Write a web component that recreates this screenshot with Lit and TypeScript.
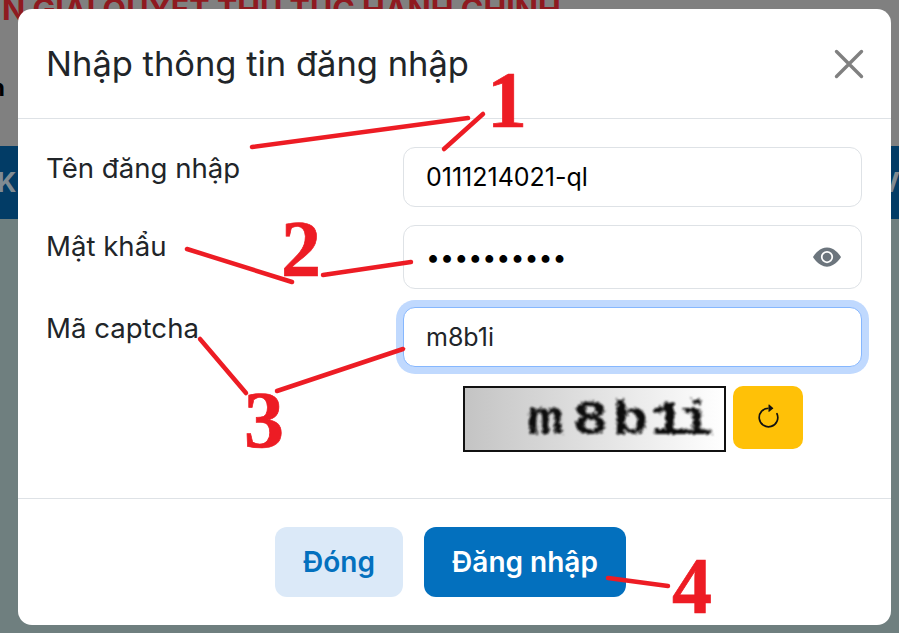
import { LitElement, css, html, svg } from 'lit';
import { customElement } from 'lit/decorators.js';

const LINES = [
  [252, 147, 468, 118],
  [444, 149, 483, 114],
  [187, 249, 292, 282],
  [323, 275, 411, 262],
  [200, 339, 246, 393],
  [277, 391, 403, 349],
  [608, 578, 668, 586],
];

const NUMBERS = [
  { n: '1', x: 507, y: 127 },
  { n: '2', x: 301, y: 276 },
  { n: '3', x: 264, y: 447 },
  { n: '4', x: 692, y: 613 },
];

@customElement('app-root')
export class AppRoot extends LitElement {
  static styles = css`
    :host {
      display: block;
      position: relative;
      width: 899px;
      height: 633px;
      overflow: hidden;
      font-family: Inter, 'Noto Sans', sans-serif;
      background: #6f7f7f;
    }

    .page-top {
      height: 146px;
      background: #808080;
      overflow: hidden;
    }

    .page-title {
      margin: -6px 0 0 2px;
      color: #8f1a20;
      font-size: 30.5px;
      font-weight: 700;
      line-height: 30px;
      white-space: nowrap;
    }

    .page-sub {
      margin: 49px 0 0 -10px;
      color: #000;
      font-size: 24px;
      font-weight: 700;
      line-height: 30px;
    }

    .page-band {
      height: 73px;
      display: flex;
      justify-content: space-between;
      align-items: center;
      margin: 0 -1px 0 -3px;
      background: #023c66;
      color: #808b92;
      font-size: 27px;
      font-weight: 700;
      overflow: hidden;
    }

    .modal {
      position: absolute;
      left: 18px;
      top: 9px;
      width: 873px;
      height: 616px;
      display: flex;
      flex-direction: column;
      background: #fff;
      border-radius: 14px;
      color: #212529;
    }

    .modal-header {
      height: 110px;
      flex: none;
      box-sizing: border-box;
      display: flex;
      align-items: center;
      justify-content: space-between;
      padding: 0 27px 0 28px;
      border-bottom: 1px solid #dee2e6;
    }

    .modal-title {
      margin: 0;
      font-size: 34.5px;
      font-weight: 400;
      line-height: 1.2;
    }

    .close {
      display: block;
      width: 30px;
      height: 30px;
      color: #808080;
    }

    .modal-body {
      flex: 1;
      padding: 28px 29px 0 28px;
      display: grid;
      grid-template-columns: 357px 459px;
      grid-template-rows: 60px 64px 60px auto;
      row-gap: 18px;
    }

    label {
      padding-top: 1px;
      font-size: 27.6px;
      line-height: 40px;
    }

    .field {
      position: relative;
    }

    input {
      display: block;
      box-sizing: border-box;
      width: 100%;
      height: 100%;
      padding: 0 22px;
      border: 1px solid #dee2e6;
      border-radius: 12px;
      background: #fff;
      color: #000;
      font: 400 25px Inter, 'Noto Sans', sans-serif;
      outline: none;
    }

    input.focused {
      border-color: #86b7fe;
      box-shadow: 0 0 0 7px #c0d9fe;
      color: #212529;
    }

    .eye {
      position: absolute;
      right: 21px;
      top: 22px;
      width: 28px;
      height: 20px;
      color: #6c757d;
    }

    .captcha-row {
      grid-column: 2;
      display: flex;
      align-items: flex-start;
      gap: 7px;
      padding: 1px 0 0 60px;
    }

    .captcha {
      display: block;
      box-sizing: border-box;
      width: 263px;
      height: 66px;
      border: 2px solid #111;
      background: linear-gradient(90deg, #c4c4c4, #fff);
    }

    .captcha text {
      font: 700 48px 'Liberation Mono', monospace;
      fill: #111;
    }

    .refresh {
      width: 70px;
      height: 63px;
      display: grid;
      place-items: center;
      padding: 0;
      border: none;
      border-radius: 10px;
      background: #ffc107;
      color: #111;
    }

    .refresh svg {
      display: block;
      width: 27px;
      height: 27px;
    }

    .modal-footer {
      height: 127px;
      flex: none;
      box-sizing: border-box;
      display: flex;
      justify-content: center;
      align-items: flex-start;
      gap: 21px;
      padding: 28px 8px 0 0;
      border-top: 1px solid #dee2e6;
    }

    .btn {
      height: 70px;
      padding: 0;
      border: none;
      border-radius: 12px;
      font: 600 28px Inter, 'Noto Sans', sans-serif;
    }

    .btn-close {
      width: 128px;
      background: #dbe9f8;
      color: #0370be;
    }

    .btn-login {
      width: 202px;
      background: #0370be;
      color: #fff;
    }

    .notes {
      position: absolute;
      inset: 0;
      width: 899px;
      height: 633px;
      pointer-events: none;
    }

    .notes line {
      stroke: #ed1c24;
      stroke-width: 4.5;
      stroke-linecap: round;
    }

    .notes text {
      fill: #ed1c24;
      stroke: #ed1c24;
      stroke-width: 0.7;
      font: 700 80px 'Liberation Serif', serif;
      text-anchor: middle;
    }
  `;

  render() {
    return html`
      <div class="page-top">
        <p class="page-title">N GIẢI QUYẾT THỦ TỤC HÀNH CHÍNH</p>
        <div class="page-sub">n</div>
      </div>
      <div class="page-band"><span>KH</span><span>V</span></div>

      <section class="modal">
        <header class="modal-header">
          <h5 class="modal-title">Nhập thông tin đăng nhập</h5>
          <svg class="close" viewBox="0 0 30 30" fill="none" stroke="currentColor" stroke-width="3.4" stroke-linecap="round">
            <path d="M2.5 2.5l25 25M27.5 2.5l-25 25" />
          </svg>
        </header>
        <div class="modal-body">
          <label>Tên đăng nhập</label>
          <div class="field"><input value="0111214021-ql" /></div>
          <label>Mật khẩu</label>
          <div class="field">
            <input type="password" value="0111214021" />
            <svg class="eye" viewBox="0 2.5 16 11" fill="currentColor">
              <path d="M10.5 8a2.5 2.5 0 1 1-5 0 2.5 2.5 0 0 1 5 0" />
              <path d="M0 8s3-5.5 8-5.5S16 8 16 8s-3 5.5-8 5.5S0 8 0 8m8 3.5a3.5 3.5 0 1 0 0-7 3.5 3.5 0 0 0 0 7" />
            </svg>
          </div>
          <label>Mã captcha</label>
          <div class="field"><input class="focused" value="m8b1i" /></div>
          <div class="captcha-row">
            <svg class="captcha" viewBox="0 0 259 62">
              <filter id="rough" x="-5%" y="-20%" width="110%" height="140%">
                <feTurbulence type="fractalNoise" baseFrequency="0.45" numOctaves="2" seed="4" />
                <feDisplacementMap in="SourceGraphic" scale="6" />
                <feGaussianBlur stdDeviation="0.8" />
              </filter>
              <text x="50 86 118 148 170" y="46" transform="scale(1.25 1)" filter="url(#rough)">m8b1i</text>
            </svg>
            <button class="refresh">
              <svg viewBox="0 0 16 16" fill="currentColor">
                <path fill-rule="evenodd" d="M8 3a5 5 0 1 0 4.546 2.914.5.5 0 0 1 .908-.417A6 6 0 1 1 8 2z" />
                <path d="M8 4.466V.534a.25.25 0 0 1 .41-.192l2.36 1.966c.12.1.12.284 0 .384L8.41 4.658A.25.25 0 0 1 8 4.466" />
              </svg>
            </button>
          </div>
        </div>
        <footer class="modal-footer">
          <button class="btn btn-close">Đóng</button>
          <button class="btn btn-login">Đăng nhập</button>
        </footer>
      </section>

      <svg class="notes" viewBox="0 0 899 633">
        ${LINES.map(([x1, y1, x2, y2]) => svg`<line x1=${x1} y1=${y1} x2=${x2} y2=${y2}></line>`)}
        ${NUMBERS.map((d) => svg`<text x=${d.x} y=${d.y}>${d.n}</text>`)}
      </svg>
    `;
  }
}
